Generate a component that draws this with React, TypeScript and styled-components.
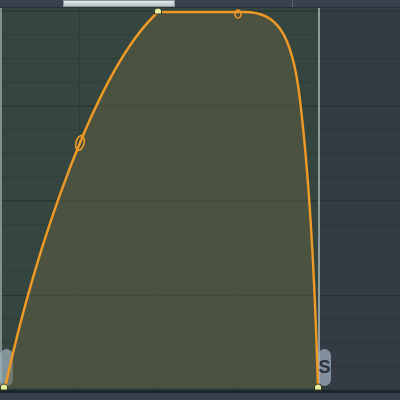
import styled, { createGlobalStyle } from 'styled-components';

const Global = createGlobalStyle`
  html, body { margin: 0; padding: 0; background: #2a3038; }
  body { font-family: "Liberation Sans", Arial, sans-serif; }
`;

const Frame = styled.div`
  width: 400px;
  height: 400px;
  display: flex;
  flex-direction: column;
  overflow: hidden;
  background: #353c46;
`;

const TopBar = styled.div`
  height: 8px;
  display: flex;
  align-items: stretch;
  background: #3b424d;
  border-bottom: 1px solid #2a3036;
  box-sizing: border-box;
`;

const Thumb = styled.div`
  margin-left: 63px;
  width: 112px;
  height: 7px;
  background: linear-gradient(#e4eaec, #b9c3c7);
  border: 1px solid #8c979c;
  box-sizing: border-box;
`;

const Divider = styled.div<{ $at: number }>`
  margin-left: ${p => p.$at}px;
  width: 1px;
  background: #5a636e;
`;

const Body = styled.div`
  flex: 1;
  display: flex;
  position: relative;
`;

const rows = (line: string, dark: string) => `
  linear-gradient(to bottom, transparent 93.8px, ${dark} 93.8px, ${dark} 94.8px) 0 3.7px / 100% 94.8px,
  linear-gradient(to bottom, transparent 22.7px, ${line} 22.7px, ${line} 23.7px) 0 3.7px / 100% 23.7px
`;

const Plot = styled.div`
  width: 320px;
  position: relative;
  box-sizing: border-box;
  border-left: 2px solid #7e8f8c;
  border-right: 2px solid #8d9c9a;
  background:
    linear-gradient(to right, transparent 77px, #2d3d37 77px, #2d3d37 78px, transparent 78px,
      transparent 157px, #2d3d37 157px, #2d3d37 158px, transparent 158px,
      transparent 237px, #2d3d37 237px, #2d3d37 238px, transparent 238px),
    ${rows('#2d3d37', '#25332e')},
    #34463f;
`;

const Side = styled.div`
  flex: 1;
  background: ${rows('#2e343d', '#2a3038')}, #343b45;
`;

const Curve = styled.svg`
  position: absolute;
  left: -2px;
  top: -8px;
  overflow: visible;
`;

const Pill = styled.div<{ $left: number }>`
  position: absolute;
  left: ${p => p.$left}px;
  top: 341px;
  width: 13px;
  height: 37px;
  border-radius: 7px;
  background: rgba(165, 180, 194, 0.7);
  color: #2c3440;
  font-size: 18px;
  font-weight: bold;
  display: flex;
  align-items: center;
  justify-content: center;
`;

const BottomBar = styled.div`
  height: 10px;
  background: #3a414c;
  border-top: 3px solid #1c2628;
  box-sizing: border-box;
`;

const orange = '#f09a26';

function Point({ x, y }: { x: number; y: number }) {
  return (
    <path
      d={`M${x - 3.5} ${y + 3} L${x - 3.5} ${y - 1} Q${x} ${y - 5} ${x + 3.5} ${y - 1} L${x + 3.5} ${y + 3} Z`}
      fill="#e6ec9e"
      stroke="#3a3a20"
      strokeWidth={1}
    />
  );
}

export default function App() {
  const rise = 'M5 388 C 35 250, 95 70, 158 12';
  const fall = 'L 245 12 C 275 12, 292 30, 300 100 C 306 150, 314 250, 318 388';
  return (
    <>
      <Global />
      <Frame>
        <TopBar>
          <Thumb />
          <Divider $at={117} />
        </TopBar>
        <Body>
          <Plot>
            <Pill $left={-2} />
            <Pill $left={316}>S</Pill>
            <Curve width={320} height={392} viewBox="0 0 320 392">
              <path d={`${rise} ${fall} Z`} fill="rgba(98,96,66,0.5)" />
              <path d={`${rise} ${fall}`} fill="none" stroke={orange} strokeWidth={2.4} strokeLinecap="round" />
              <ellipse cx={80} cy={143} rx={4} ry={7.5} fill="none" stroke={orange} strokeWidth={1.6} transform="rotate(15 80 143)" />
              <ellipse cx={238} cy={14} rx={3} ry={4} fill="none" stroke={orange} strokeWidth={1.6} />
              <Point x={4} y={387} />
              <Point x={158} y={11} />
              <Point x={318} y={387} />
            </Curve>
          </Plot>
          <Side />
        </Body>
        <BottomBar />
      </Frame>
    </>
  );
}
